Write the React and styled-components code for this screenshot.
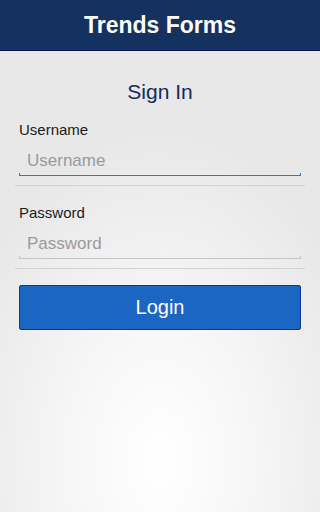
import React from 'react'
import styled, { createGlobalStyle } from 'styled-components'

const GlobalStyle = createGlobalStyle`
  html, body {
    margin: 0;
    padding: 0;
    width: 100%;
    height: 100%;
    overflow-x: hidden;
  }
  body {
    font-family: "Liberation Sans", Arial, Helvetica, sans-serif;
    background: #e8e8e8;
  }
  #root {
    min-height: 100%;
  }
  *, *::before, *::after {
    box-sizing: border-box;
  }
`

class App extends React.Component {
  render() {
    return (
      <Page>
        <GlobalStyle />
        <Header>
          <Title>Trends Forms</Title>
        </Header>
        <Main>
          <Heading>Sign In</Heading>
          <Field>
            <Label htmlFor="username">Username</Label>
            <Input id="username" type="text" placeholder="Username" size="1" />
            <Underline active />
          </Field>
          <Divider />
          <Field second>
            <Label htmlFor="password">Password</Label>
            <Input id="password" type="password" placeholder="Password" size="1" />
            <Underline />
          </Field>
          <Divider />
          <Button type="button">Login</Button>
        </Main>
      </Page>
    )
  }
}

const Page = styled.div`
  width: 100%;
  min-height: 100vh;
  display: flex;
  flex-direction: column;
  background: radial-gradient(ellipse 210px 330px at 50% 90%, #ffffff 0%, #f6f6f6 45%, #e8e8e8 100%);
`

const Header = styled.header`
  height: 51px;
  display: flex;
  align-items: center;
  justify-content: center;
  background: #14315f;
  border-bottom: 1px solid #0b1656;
`

const Title = styled.h1`
  margin: 0;
  color: #ffffff;
  font-size: 23px;
  font-weight: bold;
  line-height: 26px;
`

const Main = styled.main`
  display: flex;
  flex-direction: column;
  padding: 0 19px;
`

const Heading = styled.h2`
  margin: 28px 0 0;
  text-align: center;
  color: #152a5e;
  font-size: 21px;
  font-weight: normal;
  line-height: 26px;
`

const Field = styled.div`
  display: flex;
  flex-direction: column;
  margin-top: ${props => props.second ? '18px' : '16px'};
`

const Label = styled.label`
  color: #1c1c1c;
  font-size: 15px;
  line-height: 18px;
`

const Input = styled.input`
  width: 100%;
  min-width: 0;
  height: 25px;
  margin: 9px 0 0;
  padding: 0 0 0 8px;
  border: none;
  outline: none;
  background: transparent;
  font-family: inherit;
  font-size: 17px;
  color: #333;

  &::placeholder {
    color: #9a9a9a;
  }
`

const Underline = styled.div`
  height: 3px;
  border: 1px solid ${props => props.active ? '#2a7cc4' : '#c4c4c4'};
  border-top: none;
`

const Divider = styled.div`
  height: 1px;
  margin: 9px -4px 0;
  background: #d2d2d2;
`

const Button = styled.button`
  width: 100%;
  height: 45px;
  margin-top: 16px;
  border: 1px solid #0d3a86;
  border-radius: 2px;
  background: #1b66c2;
  color: #ffffff;
  font-family: inherit;
  font-size: 20px;
  cursor: pointer;
`

export default App
